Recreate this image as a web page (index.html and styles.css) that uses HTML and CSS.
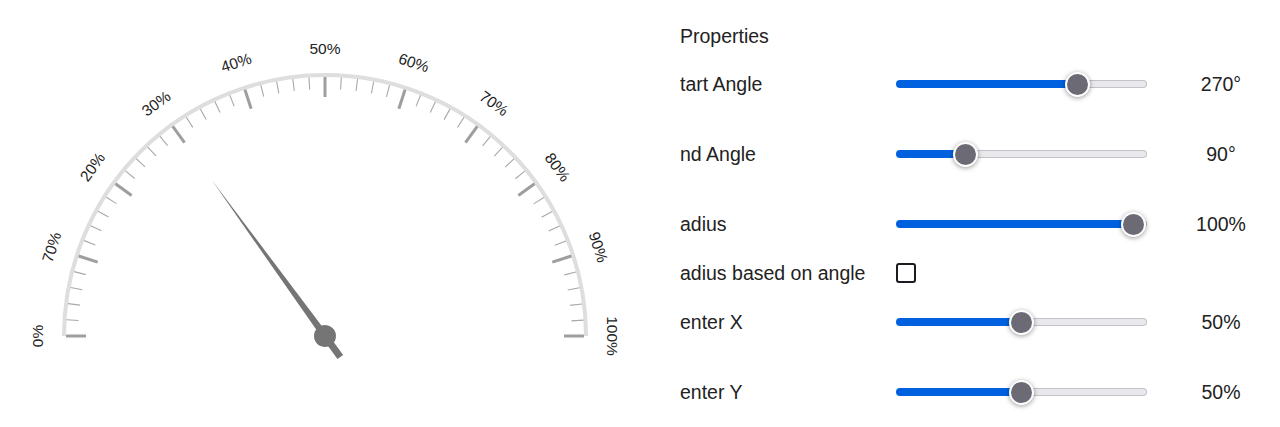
FILE: index.html
```html
<!DOCTYPE html>
<html lang="en">
<head>
    <meta charset="UTF-8">
    <meta name="viewport" content="width=device-width, initial-scale=1.0">
    <title>Gauge Properties</title>
    <link rel="stylesheet" href="styles.css">
</head>
<body>

    <!-- Gauge: centre at (325, 336), scale arc radius 261 -->
    <div class="gauge">
        <svg width="650" height="427" viewBox="0 0 650 427">
            <path class="scale-arc" d="M 64 336 A 261 261 0 0 1 586 336"/>

            <!-- minor ticks every 2% -->
            <path class="minor-ticks" d="M 72 336 A 253 253 0 0 1 578 336"/>

            <!-- major ticks every 10% -->
            <g class="major-ticks">
                <line x1="325" y1="77" x2="325" y2="97" transform="rotate(-90 325 336)"/>
                <line x1="325" y1="77" x2="325" y2="97" transform="rotate(-72 325 336)"/>
                <line x1="325" y1="77" x2="325" y2="97" transform="rotate(-54 325 336)"/>
                <line x1="325" y1="77" x2="325" y2="97" transform="rotate(-36 325 336)"/>
                <line x1="325" y1="77" x2="325" y2="97" transform="rotate(-18 325 336)"/>
                <line x1="325" y1="77" x2="325" y2="97"/>
                <line x1="325" y1="77" x2="325" y2="97" transform="rotate(18 325 336)"/>
                <line x1="325" y1="77" x2="325" y2="97" transform="rotate(36 325 336)"/>
                <line x1="325" y1="77" x2="325" y2="97" transform="rotate(54 325 336)"/>
                <line x1="325" y1="77" x2="325" y2="97" transform="rotate(72 325 336)"/>
                <line x1="325" y1="77" x2="325" y2="97" transform="rotate(90 325 336)"/>
            </g>

            <g class="scale-labels">
                <text x="325" y="54" transform="rotate(-90 325 336)">0%</text>
                <text x="325" y="54" transform="rotate(-72 325 336)">70%</text>
                <text x="325" y="54" transform="rotate(-54 325 336)">20%</text>
                <text x="325" y="54" transform="rotate(-36 325 336)">30%</text>
                <text x="325" y="54" transform="rotate(-18 325 336)">40%</text>
                <text x="325" y="54">50%</text>
                <text x="325" y="54" transform="rotate(18 325 336)">60%</text>
                <text x="325" y="54" transform="rotate(36 325 336)">70%</text>
                <text x="325" y="54" transform="rotate(54 325 336)">80%</text>
                <text x="325" y="54" transform="rotate(72 325 336)">90%</text>
                <text x="325" y="54" transform="rotate(90 325 336)">100%</text>
            </g>

            <!-- needle at 30% -->
            <g class="needle" transform="rotate(-36 325 336)">
                <polygon points="325,143 328.5,336 328.5,362 321.5,362 321.5,336"/>
                <circle cx="325" cy="336" r="11"/>
            </g>
        </svg>
    </div>

    <!-- Properties panel -->
    <div class="panel">
        <div class="panel-title">Properties</div>

        <div class="row gap-after">
            <span class="label">tart Angle</span>
            <input type="range" min="0" max="360" value="270" style="--p: 0.75">
            <span class="value">270°</span>
        </div>

        <div class="row gap-after">
            <span class="label">nd Angle</span>
            <input type="range" min="0" max="360" value="90" style="--p: 0.25">
            <span class="value">90°</span>
        </div>

        <div class="row">
            <span class="label">adius</span>
            <input type="range" min="0" max="100" value="100" style="--p: 1">
            <span class="value">100%</span>
        </div>

        <div class="row check-row">
            <span class="label">adius based on angle</span>
            <input type="checkbox">
        </div>

        <div class="row gap-after">
            <span class="label">enter X</span>
            <input type="range" min="0" max="100" value="50" style="--p: 0.5">
            <span class="value">50%</span>
        </div>

        <div class="row">
            <span class="label">enter Y</span>
            <input type="range" min="0" max="100" value="50" style="--p: 0.5">
            <span class="value">50%</span>
        </div>
    </div>

</body>
</html>
```

FILE: styles.css
```css
/* General Reset */
* {
    margin: 0;
    padding: 0;
    box-sizing: border-box;
}

body {
    background: #fff;
    color: #222;
    font-family: "Liberation Sans", Arial, sans-serif;
    display: flex;
    height: 100vh;
    overflow: hidden;
}

/* Gauge */
.gauge {
    width: 650px;
    flex-shrink: 0;
}

.gauge svg {
    display: block;
}

.scale-arc {
    fill: none;
    stroke: #dedede;
    stroke-width: 4;
}

.minor-ticks {
    fill: none;
    stroke: #a8a8a8;
    stroke-width: 12;
    stroke-dasharray: 1.1 14.796;
    stroke-dashoffset: 0.55;
}

.major-ticks line {
    stroke: #9e9e9e;
    stroke-width: 3;
}

.scale-labels text {
    font-family: "Liberation Sans", Arial, sans-serif;
    font-size: 15.5px;
    fill: #222;
    text-anchor: middle;
}

.needle {
    fill: #757575;
}

/* Properties Panel */
.panel {
    margin-left: 30px;
    padding-top: 12px;
    display: flex;
    flex-direction: column;
    font-size: 19.5px;
}

.panel-title {
    height: 48px;
    line-height: 48px;
}

.row {
    display: grid;
    grid-template-columns: 216px 251px 114px;
    align-items: center;
    height: 48px;
}

.row.gap-after {
    margin-bottom: 22px;
}

.row.check-row {
    height: 50px;
}

.value {
    padding-left: 34px;
    text-align: center;
}

/* Range sliders */
input[type="range"] {
    -webkit-appearance: none;
    appearance: none;
    width: 251px;
    height: 24px;
    background: transparent;
    outline: none;
}

input[type="range"]::-webkit-slider-runnable-track {
    height: 8px;
    border: 1px solid transparent;
    border-radius: 4px;
    background:
        linear-gradient(to right, #0061e0 calc(13px + var(--p) * 225px), transparent 0) border-box,
        linear-gradient(#e9e9ed, #e9e9ed) padding-box,
        linear-gradient(#c2c2c8, #c2c2c8) border-box;
}

input[type="range"]::-webkit-slider-thumb {
    -webkit-appearance: none;
    appearance: none;
    width: 25px;
    height: 25px;
    margin-top: -9.5px;
    border-radius: 50%;
    border: 2.5px solid #fff;
    background: #6b6a75;
    box-shadow: 0 1px 5px rgba(0, 0, 0, 0.4);
}

/* Checkbox */
input[type="checkbox"] {
    -webkit-appearance: none;
    appearance: none;
    width: 20px;
    height: 20px;
    border: 2.5px solid #1c1b22;
    border-radius: 3px;
    background: #fff;
}
```
